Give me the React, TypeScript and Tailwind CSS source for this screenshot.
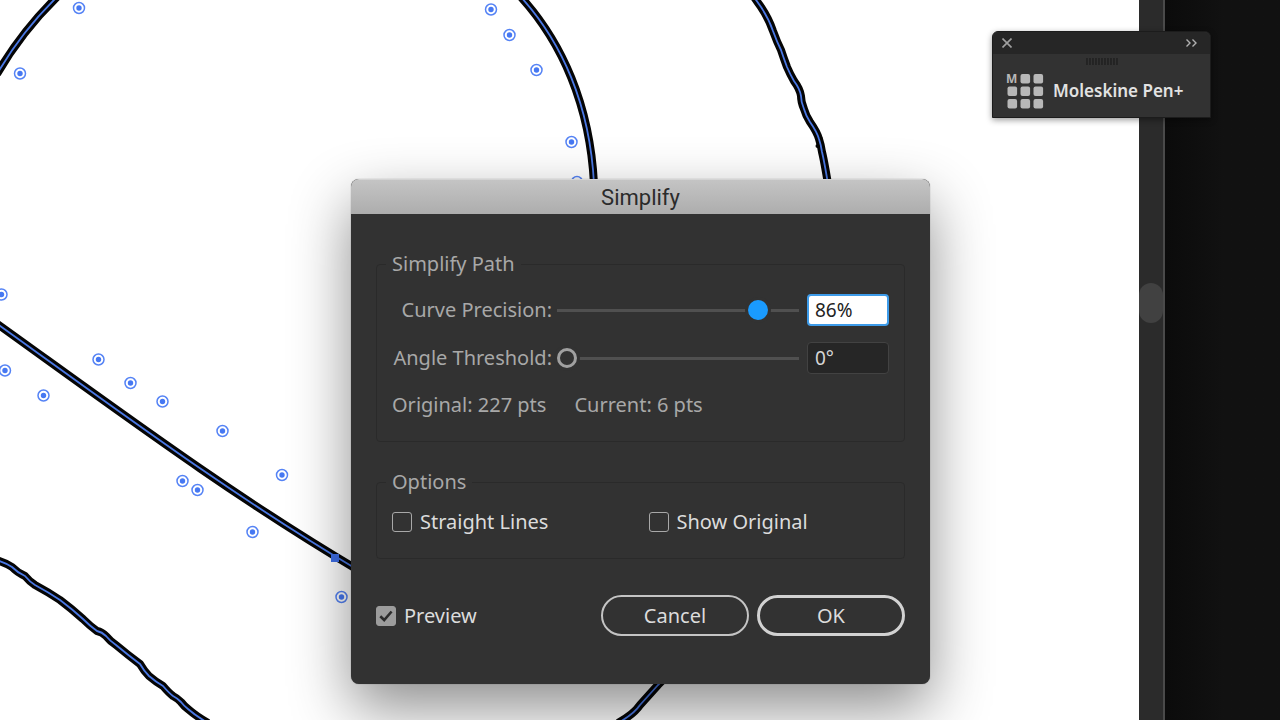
import { useState } from 'react';
import { clsx } from 'clsx';

const strokes = [
  'M-3 74 Q 22 31 58 -4',
  'M520 -4 C 562 42 590 105 594 184',
  'M752 -6 Q756 0 761 7 Q769 19 773 31 Q777 42 781 50 Q784 59 787 67 Q790 74 794 81 Q800 89 801 96 Q801 102 804 109 Q806 116 810 122 Q817 132 819 139 Q821 145 822 152 Q824 160 828 184',
  'M-4 323 C 120 412 230 494 358 570',
  'M-4 560 Q6 563 12 567 Q18 573 25 576 Q30 582 35 585 Q48 592 60 600 Q72 609 83 619 Q90 626 97 631 Q102 632 106 636 Q110 641 116 645 Q128 655 140 664 Q144 671 149 676 Q156 682 163 686 Q169 693 173 696 Q177 698 181 702 Q184 706 188 709 Q196 716 208 723',
  'M664 679 L658 685 L640 705 Q634 714 618 723',
];

const handles = [
  [79, 8],
  [20, 73.5],
  [491, 9.5],
  [509.5, 35],
  [536.5, 70],
  [571.5, 142],
  [577, 182],
  [1.5, 294.5],
  [5, 370.5],
  [43.5, 395.5],
  [98.5, 359.5],
  [130.5, 383],
  [162.5, 401.5],
  [222.5, 431],
  [282, 475],
  [182.5, 481],
  [197.5, 490],
  [252.5, 532],
  [341.5, 597],
];

const Artwork = () => (
  <svg className="block w-full h-full" fill="none" aria-hidden="true">
    {strokes.map((d) => (
      <g key={d}>
        <path d={d} stroke="#050505" strokeWidth="8" strokeLinejoin="round" />
        <path d={d} stroke="#4a78e4" strokeWidth="1.8" strokeLinejoin="round" />
      </g>
    ))}
    <circle cx="817.5" cy="146" r="2" fill="#050505" />
    {handles.map(([x, y]) => (
      <g key={`${x}-${y}`}>
        <circle cx={x} cy={y} r="5.5" fill="#fff" stroke="#5583f5" strokeWidth="1.5" />
        <circle cx={x} cy={y} r="2.7" fill="#4678f2" />
      </g>
    ))}
    <rect x="331" y="554" width="8" height="8" fill="#3f6fe8" />
  </svg>
);

const BrushIcon = () => (
  <svg width="38" height="36" viewBox="0 0 38 36" fill="#b8b8b8" className="overflow-visible" aria-hidden="true">
    <text x="0" y="10" fontSize="12" fontWeight="700" fontFamily="Noto Sans, sans-serif">
      M
    </text>
    {[0, 1, 2].map((row) =>
      [0, 1, 2].map((col) =>
        row + col === 0 ? null : (
          <rect
            key={`${row}-${col}`}
            x={1.5 + col * 13}
            y={1 + row * 12.5}
            width="9.6"
            height="9.6"
            rx="2"
          />
        )
      )
    )}
  </svg>
);

const BrushPanel = () => (
  <section className="absolute top-[31px] right-[69px] w-[219px] rounded-t-md border border-[#1c1c1c] bg-[#323232] shadow-[0_2px_6px_rgba(0,0,0,0.4)]">
    <header className="flex h-[22px] items-center justify-between rounded-t-md bg-[#262626] pl-2 pr-3">
      <button type="button" aria-label="Close" className="p-px">
        <svg width="10" height="10" viewBox="0 0 10 10" stroke="#a0a0a0" strokeWidth="1.6">
          <path d="M.5.5l9 9M9.500.5l-9 9" />
        </svg>
      </button>
      <button type="button" aria-label="Collapse" className="p-px">
        <svg width="11" height="8" viewBox="0 0 11 8" fill="none" stroke="#b0b0b0" strokeWidth="1.4">
          <path d="M.5.5L4 4 .5 7.500M6.500.5L10 4l-3.500 3.500" />
        </svg>
      </button>
    </header>
    <div className="flex justify-center pt-1">
      <svg width="32" height="7" stroke="#1c1c1c" strokeWidth="1.2" aria-hidden="true">
        <path d="M1 0v7M4 0v7M7 0v7M10 0v7M13 0v7M16 0v7M19 0v7M22 0v7M25 0v7M28 0v7M31 0v7" />
      </svg>
    </div>
    <div className="flex items-center gap-[9px] pt-2 pb-2 pl-[13px]">
      <BrushIcon />
      <span className="text-[17px] leading-6 font-semibold text-[#e2e2e2]">Moleskine Pen+</span>
    </div>
  </section>
);

interface SliderRowProps {
  id: string;
  label: string;
  unit: string;
  max: number;
  value: number;
  active?: boolean;
  onChange: (value: number) => void;
}

const SliderRow = ({ id, label, unit, max, value, active, onChange }: SliderRowProps) => (
  <div className="flex items-center">
    <label htmlFor={id} className="w-[160px] text-right whitespace-nowrap">
      {label}
    </label>
    <input
      id={id}
      type="range"
      min={0}
      max={max}
      value={value}
      onChange={(e) => onChange(Number(e.target.value))}
      className={clsx(
        'ml-[5px] mr-2 h-5 min-w-0 flex-1 appearance-none bg-transparent outline-none',
        '[&::-webkit-slider-runnable-track]:h-[3px] [&::-webkit-slider-runnable-track]:bg-[#505050]',
        '[&::-webkit-slider-thumb]:appearance-none [&::-webkit-slider-thumb]:size-5 [&::-webkit-slider-thumb]:-mt-[9px] [&::-webkit-slider-thumb]:rounded-full [&::-webkit-slider-thumb]:border-[3px] [&::-webkit-slider-thumb]:shadow-[0_0_0_3px_#323232]',
        active
          ? '[&::-webkit-slider-thumb]:border-[#1a9bff] [&::-webkit-slider-thumb]:bg-[#1a9bff]'
          : '[&::-webkit-slider-thumb]:border-[#a0a0a0] [&::-webkit-slider-thumb]:bg-[#323232]'
      )}
    />
    <input
      type="text"
      aria-label={`${label} value`}
      value={`${value}${unit}`}
      onChange={(e) => onChange(parseInt(e.target.value, 10) || 0)}
      className={clsx(
        'h-8 w-[82px] rounded-sm text-[19px] leading-6 outline-none',
        active
          ? 'border-2 border-[#3d9be9] bg-white px-1.5 text-[#222]'
          : 'border border-[#424242] bg-[#262626] px-[7px] text-[#d6d6d6]'
      )}
    />
  </div>
);

interface CheckProps {
  label: string;
  checked: boolean;
  onChange: (checked: boolean) => void;
}

const Check = ({ label, checked, onChange }: CheckProps) => (
  <label className="flex items-center gap-2 text-[#dcdcdc]">
    <span className="grid size-5 place-items-center">
      <input
        type="checkbox"
        checked={checked}
        onChange={(e) => onChange(e.target.checked)}
        className="col-start-1 row-start-1 size-5 appearance-none rounded-[3px] border border-[#a8a8a8] checked:border-[#9c9c9c] checked:bg-[#9c9c9c]"
      />
      {checked && (
        <svg
          className="pointer-events-none col-start-1 row-start-1"
          width="14"
          height="12"
          viewBox="0 0 14 12"
          fill="none"
          stroke="#2c2c2c"
          strokeWidth="2.6"
        >
          <path d="M1.300 6.200L5.200 10 12.600 1.500" />
        </svg>
      )}
    </span>
    {label}
  </label>
);

const SimplifyDialog = () => {
  const [precision, setPrecision] = useState(86);
  const [angle, setAngle] = useState(0);
  const [straight, setStraight] = useState(false);
  const [original, setOriginal] = useState(false);
  const [preview, setPreview] = useState(true);

  return (
    <div
      role="dialog"
      aria-labelledby="dialog-title"
      className="absolute top-[179px] left-[351px] w-[579px] overflow-hidden rounded-lg bg-[#323232] text-xl leading-6 text-[#a8a8a8] shadow-[0_24px_60px_rgba(0,0,0,0.45),0_0_1px_rgba(0,0,0,0.5)]"
    >
      <h1
        id="dialog-title"
        className="flex h-[35px] items-center justify-center border-t border-[#d4d4d4] bg-linear-to-b from-[#c4c4c4] to-[#adadad] pt-0.5 font-['Roboto',sans-serif] text-[22px] text-[#2b2b2b]"
      >
        Simplify
      </h1>

      <div className="px-[25px] pt-[38px] pb-12">
        <fieldset className="rounded-sm border border-[#2a2a2a] px-[15px] pt-[18px] pb-6">
          <legend className="-ml-1.5 px-1.5">Simplify Path</legend>
          <div className="flex flex-col gap-4">
            <SliderRow
              id="precision"
              label="Curve Precision:"
              unit="%"
              max={100}
              value={precision}
              active
              onChange={setPrecision}
            />
            <SliderRow
              id="angle"
              label="Angle Threshold:"
              unit="°"
              max={180}
              value={angle}
              onChange={setAngle}
            />
          </div>
          <p className="mt-[19px] flex gap-7">
            <span>Original: 227 pts</span>
            <span>Current: 6 pts</span>
          </p>
        </fieldset>

        <fieldset className="mt-7 rounded-sm border border-[#2a2a2a] px-[15px] pt-4 pb-6">
          <legend className="-ml-1.5 px-1.5">Options</legend>
          <div className="grid grid-cols-2 gap-4">
            <Check label="Straight Lines" checked={straight} onChange={setStraight} />
            <Check label="Show Original" checked={original} onChange={setOriginal} />
          </div>
        </fieldset>

        <div className="mt-9 flex items-center justify-between">
          <Check label="Preview" checked={preview} onChange={setPreview} />
          <div className="flex gap-2 text-[#dcdcdc]">
            <button type="button" className="h-[41px] w-[148px] rounded-full border-2 border-[#c4c4c4]">
              Cancel
            </button>
            <button type="button" className="h-[41px] w-[148px] rounded-full border-3 border-[#d2d2d2]">
              OK
            </button>
          </div>
        </div>
      </div>
    </div>
  );
};

export default function App() {
  return (
    <main className="relative flex h-screen overflow-hidden bg-white font-['Noto_Sans',sans-serif]">
      <div className="min-w-0 flex-1">
        <Artwork />
      </div>
      {/* Scrollbar */}
      <div className="w-[26px] border-r-2 border-[#4a4a4a] bg-[#2b2b2b] pt-[283px]">
        <div className="h-10 rounded-full bg-[#414141]" />
      </div>
      <div className="w-[115px] bg-linear-to-r from-[#0b0b0b] to-[#111] to-50%" />

      <BrushPanel />
      <SimplifyDialog />
    </main>
  );
}
